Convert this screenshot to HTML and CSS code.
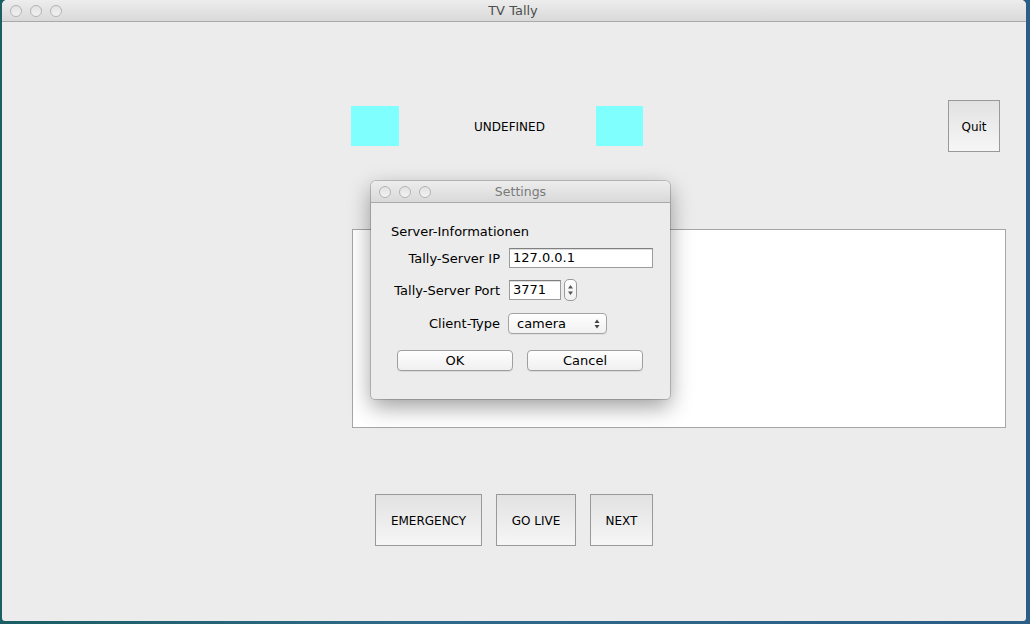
FILE: index.html
```html
<!DOCTYPE html>
<html>
<head>
<meta charset="utf-8">
<title>TV Tally</title>
<link rel="stylesheet" href="styles.css">
</head>
<body>
<div class="desktop">
  <div class="window">
    <div class="titlebar">
      <div class="lights">
        <span class="light"></span><span class="light"></span><span class="light"></span>
      </div>
      <div class="title">TV Tally</div>
    </div>
    <div class="content">
      <div class="top-row">
        <div class="tally-box"></div>
        <div class="state">UNDEFINED</div>
        <div class="tally-box tally-box-right"></div>
        <button class="sq-btn quit">Quit</button>
      </div>
      <div class="log"></div>
      <div class="action-row">
        <button class="sq-btn emergency">EMERGENCY</button>
        <button class="sq-btn golive">GO LIVE</button>
        <button class="sq-btn next">NEXT</button>
      </div>
    </div>

    <div class="dialog">
      <div class="titlebar dlg-titlebar">
        <div class="lights">
          <span class="light"></span><span class="light"></span><span class="light"></span>
        </div>
        <div class="title dlg-title">Settings</div>
      </div>
      <div class="dlg-body">
        <div class="section">Server-Informationen</div>
        <div class="form-row row-ip">
          <label class="lbl">Tally-Server IP</label>
          <div class="field field-ip">127.0.0.1</div>
        </div>
        <div class="form-row row-port">
          <label class="lbl">Tally-Server Port</label>
          <div class="field field-port">3771</div>
          <div class="stepper">
            <svg width="11" height="20" viewBox="0 0 11 20"><path d="M5.5 5 L8 8.5 L3 8.5 Z" fill="#555"/><path d="M5.5 15 L8 11.5 L3 11.5 Z" fill="#555"/></svg>
          </div>
        </div>
        <div class="form-row row-type">
          <label class="lbl">Client-Type</label>
          <div class="select">
            <span>camera</span>
            <svg width="8" height="12" viewBox="0 0 8 12"><path d="M4 1.5 L6.5 5 L1.5 5 Z" fill="#444"/><path d="M4 10.5 L6.5 7 L1.5 7 Z" fill="#444"/></svg>
          </div>
        </div>
        <div class="dlg-buttons">
          <button class="push">OK</button>
          <button class="push">Cancel</button>
        </div>
      </div>
    </div>
  </div>
</div>
</body>
</html>
```

FILE: styles.css
```css
* { box-sizing: border-box; }
html, body { margin: 0; padding: 0; }
body {
  width: 1030px;
  height: 624px;
  overflow: hidden;
  font-family: "DejaVu Sans", "Liberation Sans", sans-serif;
  font-size: 12px;
  color: #000;
}
.desktop {
  width: 1030px;
  height: 624px;
  background: linear-gradient(90deg, #1b5e63 0%, #2f6a8a 40%, #2b5d86 100%);
  padding-left: 2px;
}
.window {
  position: relative;
  width: 1024px;
  height: 621px;
  background: #ececec;
  border-radius: 5px 5px 3px 3px;
  overflow: hidden;
  display: flex;
  flex-direction: column;
}
.titlebar {
  position: relative;
  height: 22px;
  flex: none;
  background: linear-gradient(#ededed, #d9d9d9);
  border-bottom: 1px solid #a9a9a9;
  display: flex;
  align-items: center;
  justify-content: center;
}
.lights {
  position: absolute;
  left: 8px;
  top: 5px;
  display: flex;
  gap: 8px;
}
.light {
  width: 12px;
  height: 12px;
  border-radius: 50%;
  border: 1px solid #b3b3b3;
  background: linear-gradient(#e2e2e2, #f2f2f2);
}
.title {
  font-size: 13px;
  color: #4e4e4e;
  margin-left: -2px;
  margin-top: -1px;
}
.content {
  flex: 1;
  display: flex;
  flex-direction: column;
}
.top-row {
  margin-top: 78px;
  padding-left: 349px;
  height: 52px;
  display: flex;
  align-items: center;
}
.tally-box {
  width: 48px;
  height: 40px;
  background: #80ffff;
}
.tally-box-right { width: 47px; }
.state {
  width: 197px;
  text-align: center;
  font-size: 12px;
  padding-left: 24px;
  margin-top: 1px;
}
.sq-btn {
  font-family: "DejaVu Sans", "Liberation Sans", sans-serif;
  font-size: 12px;
  color: #000;
  height: 52px;
  border: 1px solid #999;
  border-radius: 0;
  background: linear-gradient(#e2e2e2, #f6f6f6);
  padding: 1px 0 0 0;
}
.quit {
  width: 52px;
  margin-left: 305px;
}
.log {
  margin-top: 77px;
  margin-left: 350px;
  width: 654px;
  height: 199px;
  background: #fff;
  border: 1px solid #a6a6a6;
}
.action-row {
  margin-top: 66px;
  padding-left: 373px;
  display: flex;
  gap: 14px;
}
.emergency { width: 107px; }
.golive { width: 80px; }
.next { width: 63px; }

.dialog {
  position: absolute;
  left: 369px;
  top: 181px;
  width: 299px;
  height: 218px;
  background: #ececec;
  border-radius: 5px 5px 4px 4px;
  box-shadow: 0 0 0 1px rgba(0,0,0,0.18), 0 8px 22px rgba(0,0,0,0.38);
  overflow: hidden;
}
.dlg-titlebar { height: 22px; }
.dlg-title { color: #7a7a7a; margin-left: 0; font-size: 12.5px; }
.dlg-body {
  padding: 21px 0 0 20px;
  display: flex;
  flex-direction: column;
  font-size: 13px;
}
.section {
  font-size: 13px;
  height: 17px;
}
.form-row {
  display: flex;
  align-items: center;
}
.lbl {
  width: 109px;
  text-align: right;
  font-size: 13px;
}
.row-ip { margin-top: 7px; height: 20px; }
.row-port { margin-top: 11px; height: 22px; }
.row-type { margin-top: 12px; height: 21px; }
.field {
  background: #fff;
  border: 1px solid #9c9c9c;
  border-top-color: #808080;
  height: 20px;
  font-size: 13px;
  line-height: 18px;
  padding-left: 3px;
  box-shadow: inset 0 1px 0 #ddd;
}
.field-ip { margin-left: 9px; width: 144px; }
.field-port { margin-left: 9px; width: 52px; }
.stepper {
  margin-left: 3px;
  width: 13px;
  height: 22px;
  border: 1px solid #9a9a9a;
  border-radius: 5px;
  background: linear-gradient(#fff, #f0f0f0);
  display: flex;
  align-items: center;
  justify-content: center;
}
.select {
  margin-left: 8px;
  width: 99px;
  height: 21px;
  border: 1px solid #a3a3a3;
  border-radius: 4px;
  background: linear-gradient(#fff, #f1f1f1);
  box-shadow: 0 1px 0 rgba(0,0,0,0.05);
  display: flex;
  align-items: center;
  justify-content: space-between;
  padding: 0 5px 0 8px;
  font-size: 13px;
}
.dlg-buttons {
  margin-top: 16px;
  margin-left: 6px;
  display: flex;
  gap: 14px;
}
.push {
  width: 116px;
  height: 21px;
  font-family: "DejaVu Sans", "Liberation Sans", sans-serif;
  font-size: 13px;
  color: #000;
  border: 1px solid #9f9f9f;
  border-radius: 4px;
  background: linear-gradient(#fefefe, #f0f0f0);
  box-shadow: 0 1px 0 rgba(0,0,0,0.08);
  padding: 0;
}
```
